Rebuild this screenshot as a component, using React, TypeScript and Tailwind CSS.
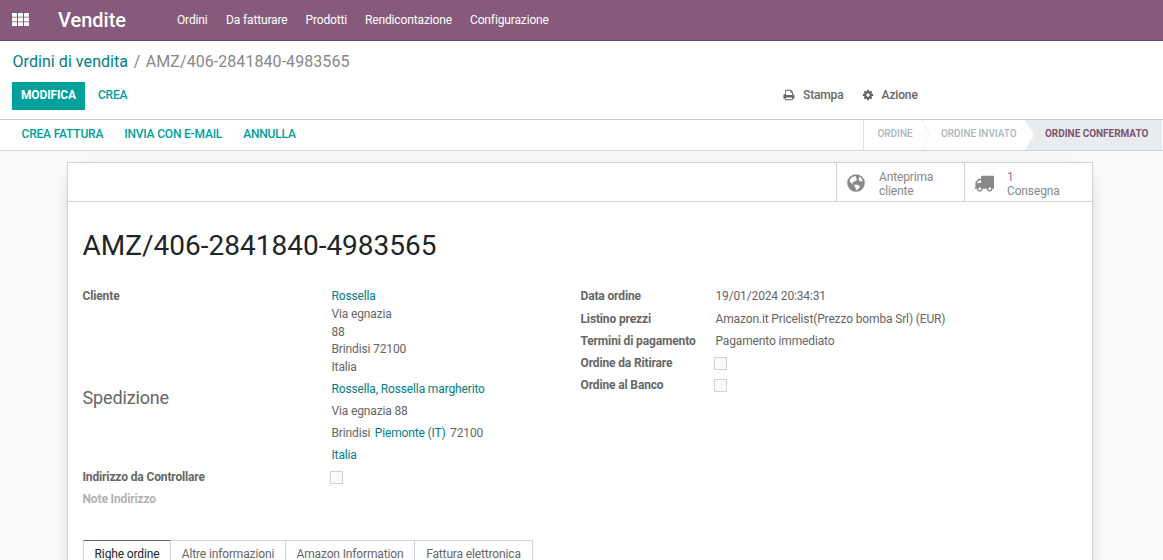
import { ReactNode } from "react";
import clsx from "clsx";

const menu = [
  { label: "Ordini", className: "ml-[51px] w-[31px]" },
  { label: "Da fatturare", className: "ml-[18px] w-[62px]" },
  { label: "Prodotti", className: "ml-[17.5px] w-[42px]" },
  { label: "Rendicontazione", className: "ml-[17.5px] w-[87px]" },
  { label: "Configurazione", className: "ml-[18px]" },
];

const tabs = [
  { label: "Righe ordine", className: "w-[88px]" },
  { label: "Altre informazioni", className: "w-[115px]" },
  { label: "Amazon Information", className: "w-[129px]" },
  { label: "Fattura elettronica", className: "w-[118px]" },
];

function Icon({ d, className }: { d: string; className?: string }) {
  return (
    <svg viewBox="0 0 1792 1792" fill="currentColor" className={clsx("shrink-0", className)}>
      <path d={d} />
    </svg>
  );
}

const printPath =
  "M448 1536h896v-256h-896v256zM448 896h896v-384h-160q-40 0-68-28t-28-68v-160h-640v640zm1152 64q0-26-19-45t-45-19-45 19-19 45 19 45 45 19 45-19 19-45zm128 0v416q0 13-9.500 22.500t-22.500 9.500h-224v160q0 40-28 68t-68 28h-960q-40 0-68-28t-28-68v-160h-224q-13 0-22.500-9.500t-9.500-22.500v-416q0-79 56.500-135.500t135.500-56.500h64v-544q0-40 28-68t68-28h672q40 0 88 20t76 48l152 152q28 28 48 76t20 88v256h64q79 0 135.500 56.500t56.500 135.500z";
const cogPath =
  "M1152 896q0-106-75-181t-181-75-181 75-75 181 75 181 181 75 181-75 75-181zm512-109v222q0 12-8 23t-20 13l-185 28q-19 54-39 91 35 50 107 138 10 12 10 25t-9 23q-27 37-99 108t-94 71q-12 0-26-9l-138-108q-44 23-91 38-16 136-29 186-7 28-36 28h-222q-14 0-24.500-8.500t-11.500-21.500l-28-184q-49-16-90-37l-141 107q-10 9-25 9-14 0-25-11-126-114-165-168-7-10-7-23 0-12 8-23 15-21 51-66.500t54-70.500q-27-50-41-99l-183-27q-13-2-21-12.500t-8-23.500v-222q0-12 8-23t19-13l186-28q14-46 39-92-40-57-107-138-10-12-10-24 0-10 9-23 26-36 98.500-107.500t94.500-71.500q13 0 26 10l138 107q44-23 91-38 16-136 29-186 7-28 36-28h222q14 0 24.500 8.500t11.500 21.500l28 184q49 16 90 37l142-107q9-9 24-9 13 0 25 10 129 119 165 170 7 8 7 22 0 12-8 23-15 21-51 66.500t-54 70.500q26 50 41 98l183 28q13 2 21 12.500t8 23.500z";
const truckPath =
  "M640 1408q0-52-38-90t-90-38-90 38-38 90 38 90 90 38 90-38 38-90zm-384-512h384v-256h-158q-13 0-22 9l-195 195q-9 9-9 22v30zm1280 512q0-52-38-90t-90-38-90 38-38 90 38 90 90 38 90-38 38-90zm256-1088v1024q0 15-4 26.500t-13.500 18.500-16.500 11.500-23.500 6-22.500 2-25.500 0-22.500-.5q0 106-75 181t-181 75-181-75-75-181h-384q0 106-75 181t-181 75-181-75-75-181h-64q-3 0-22.500.5t-25.500 0-22.500-2-23.500-6-16.500-11.500-13.500-18.500-4-26.500q0-26 19-45t45-19v-320q0-8-.5-35t0-38 2.500-34.500 6.500-37 14-30.500 22.500-30l198-198q19-19 50.500-32t58.500-13h160v-192q0-26 19-45t45-19h1024q26 0 45 19t19 45z";

function AppsIcon() {
  return (
    <svg viewBox="0 0 17 13" fill="white" className="mb-px h-[13px] w-[17px]">
      {[0, 4.6, 9.2].map((y) =>
        [0, 6, 12].map((x) => <rect key={`${x}-${y}`} x={x} y={y} width="5" height="3.8" rx="0.4" />)
      )}
    </svg>
  );
}

function GlobeIcon() {
  return (
    <svg viewBox="0 0 18 18" className="size-[18px] shrink-0">
      <circle cx="9" cy="9" r="8.8" fill="#888" />
      <path
        d="M5.2 2.9L8.6 1.9L9.3 2.8L8.3 4L10 4.8L9.6 6.2L7.6 7.2L6.6 8.3L4.8 8.4L5.2 9.6L6.6 10L6 10.6L4.4 9.6L2.9 7.4L2.8 5.6Z M12.4 3L13.9 3.6L15.8 6.8L14.2 7.6L12.6 6.9L11.6 5.4Z M8 10.6L10.6 10.8L13 12.2L12.4 13.8L10 16L8.9 15.9L8.5 13.4L7.4 11.9Z"
        fill="white"
      />
    </svg>
  );
}

function Checkbox() {
  return <span className="-ml-[1.5px] block size-[13px] border border-[#d2d2d2] bg-[#fafafa]" />;
}

function Label({ children, muted }: { children: ReactNode; muted?: boolean }) {
  return <div className={clsx("font-bold", muted ? "text-[#b2b2b2]" : "text-[#666]")}>{children}</div>;
}

function NavBar() {
  return (
    <nav className="flex h-[41px] items-center border-b border-[#68465f] bg-[#875a7b] pl-3 text-white">
      <AppsIcon />
      <div className="ml-[29px] w-[68px] text-xl leading-5 font-medium tracking-normal whitespace-nowrap">
        Vendite
      </div>
      {menu.map((item) => (
        <div key={item.label} className={clsx("whitespace-nowrap", item.className)}>
          {item.label}
        </div>
      ))}
    </nav>
  );
}

function ControlPanel() {
  return (
    <div className="h-[79px] border-b border-[#ccc] bg-white px-3 pt-px">
      <div className="flex h-10 items-center pl-[0.5px] text-base tracking-[0.06px] text-[#888]">
        <span className="text-[#017e84]">Ordini di vendita</span>
        <span className="pr-[5.5px] pl-[5.5px]">/</span>
        <span>AMZ/406-2841840-4983565</span>
      </div>
      <div className="flex items-center font-medium">
        <button className="h-7 w-[73px] bg-[#00a09d] pb-[2px] font-bold text-white">MODIFICA</button>
        <button className="ml-[13px] w-[30px] pb-[2px] text-left tracking-[-0.25px] text-[#00a09d]">CREA</button>
        <div className="ml-[655px] flex items-center pb-[2px] text-[#666]">
          <Icon d={printPath} className="size-3" />
          <span className="ml-2 w-[41px]">Stampa</span>
          <Icon d={cogPath} className="ml-[17.5px] size-3" />
          <span className="ml-2">Azione</span>
        </div>
      </div>
    </div>
  );
}

function StatusBar() {
  return (
    <div className="flex h-[31px] items-stretch border-b border-[#ced4da] bg-white pr-px">
      <div className="flex flex-1 items-center gap-[21px] pb-[3px] pl-[21.5px] font-medium tracking-[-0.19px] text-[#00a09d]">
        <span>CREA FATTURA</span>
        <span>INVIA CON E-MAIL</span>
        <span>ANNULLA</span>
      </div>
      <div className="flex w-[299px] items-stretch border-l border-[#dee2e6] text-[10px] font-medium tracking-[-0.03px] text-[#adb5bd]">
        <div className="flex w-[58px] items-center pb-[3px] pl-[13.5px]">ORDINE</div>
        <svg viewBox="0 0 9 30" className="h-[30px] w-[9px]" fill="none" stroke="#f1f3f5">
          <path d="M0 0L8 15L0 30" />
        </svg>
        <div className="flex w-[94px] items-center pb-[3px] pl-[10px] whitespace-nowrap">ORDINE INVIATO</div>
        <svg viewBox="0 0 9 30" className="h-[30px] w-[9px]" fill="#e9ecef">
          <path d="M0 0H9V30H0L9 15Z" />
        </svg>
        <div className="flex flex-1 items-center bg-[#e9ecef] pb-[3px] pl-[11px] font-bold whitespace-nowrap text-[#7c5270]">
          ORDINE CONFERMATO
        </div>
      </div>
    </div>
  );
}

function StatButtons() {
  return (
    <div className="flex h-[39px] justify-end border-b border-[#ced4da] leading-[14px] text-[#888]">
      <div className="flex w-32 items-center border-l border-[#ced4da] pt-[2px] pl-[10px]">
        <GlobeIcon />
        <span className="ml-[14px] pt-[2px]">
          Anteprima
          <br />
          cliente
        </span>
      </div>
      <div className="flex w-32 items-center border-l border-[#ced4da] pt-[2px] pl-[9px]">
        <Icon d={truckPath} className="size-5" />
        <span className="ml-[13px] pt-[2px]">
          <span className="text-[#a2709a]">1</span>
          <br />
          Consegna
        </span>
      </div>
    </div>
  );
}

function OrderDetails() {
  return (
    <div className="-ml-[0.5px] flex text-[#666]">
      <div className="w-[498px]">
        <div className="flex h-[93px]">
          <div className="w-[249px]">
            <Label>Cliente</Label>
          </div>
          <div className="pt-px leading-[17.8px]">
            <div className="text-[#017e84]">Rossella</div>
            <div>Via egnazia</div>
            <div>88</div>
            <div>Brindisi 72100</div>
            <div>Italia</div>
          </div>
        </div>
        <div className="flex">
          <div className="w-[249px] pt-[8px] text-lg leading-5">Spedizione</div>
          <div className="leading-[22px] [&_b]:font-normal [&_b]:text-[#017e84]">
            <div className="-mt-[2px]">
              <b>Rossella, Rossella margherito</b>
            </div>
            <div>Via egnazia 88</div>
            <div className="flex gap-[4.5px]">
              Brindisi <b>Piemonte (IT)</b> 72100
            </div>
            <div>
              <b>Italia</b>
            </div>
          </div>
        </div>
        <div className="flex h-[22px] items-center">
          <div className="w-[249px]">
            <Label>Indirizzo da Controllare</Label>
          </div>
          <Checkbox />
        </div>
        <div className="flex h-[22px] items-center">
          <Label muted>Note Indirizzo</Label>
        </div>
      </div>
      <div className="-mt-px grid grid-cols-[135px_1fr] content-start items-center [grid-auto-rows:22px]">
        <div className="pb-[2px]">
          <Label>Data ordine</Label>
        </div>
        <div className="pb-[2px]">19/01/2024 20:34:31</div>
        <Label>Listino prezzi</Label>
        <div>Amazon.it Pricelist(Prezzo bomba Srl) (EUR)</div>
        <Label>Termini di pagamento</Label>
        <div>Pagamento immediato</div>
        <Label>Ordine da Ritirare</Label>
        <Checkbox />
        <Label>Ordine al Banco</Label>
        <Checkbox />
      </div>
    </div>
  );
}

function Tabs() {
  return (
    <div className="mt-[30px] flex">
      {tabs.map((tab, i) => (
        <div
          key={tab.label}
          className={clsx(
            "h-[30px] border-t border-r pt-1 text-center whitespace-nowrap",
            tab.className,
            i === 0
              ? "border-x border-x-[#ced4da] border-t-[#875a7b] text-[#212529]"
              : "border-[#ced4da] text-[#666]"
          )}
        >
          {tab.label}
        </div>
      ))}
    </div>
  );
}

export default function App() {
  return (
    <div className="h-[560px] w-[1163px] overflow-hidden bg-[#f9f9f9] font-[Roboto,sans-serif] text-xs leading-[18px] tracking-[-0.14px]">
      <NavBar />
      <ControlPanel />
      <StatusBar />
      <main className="mt-[11px] ml-[67px] h-[500px] w-[1026px] border border-[#ced4da] bg-white shadow-[0_5px_20px_-15px_rgba(0,0,0,1)]">
        <StatButtons />
        <div className="px-[15px]">
          <h1 className="mt-[26px] mb-[24px] -ml-[0.5px] h-[35px] text-[28px] leading-[35px] tracking-normal text-[#212529]">
            AMZ/406-2841840-4983565
          </h1>
          <OrderDetails />
          <Tabs />
        </div>
      </main>
    </div>
  );
}
